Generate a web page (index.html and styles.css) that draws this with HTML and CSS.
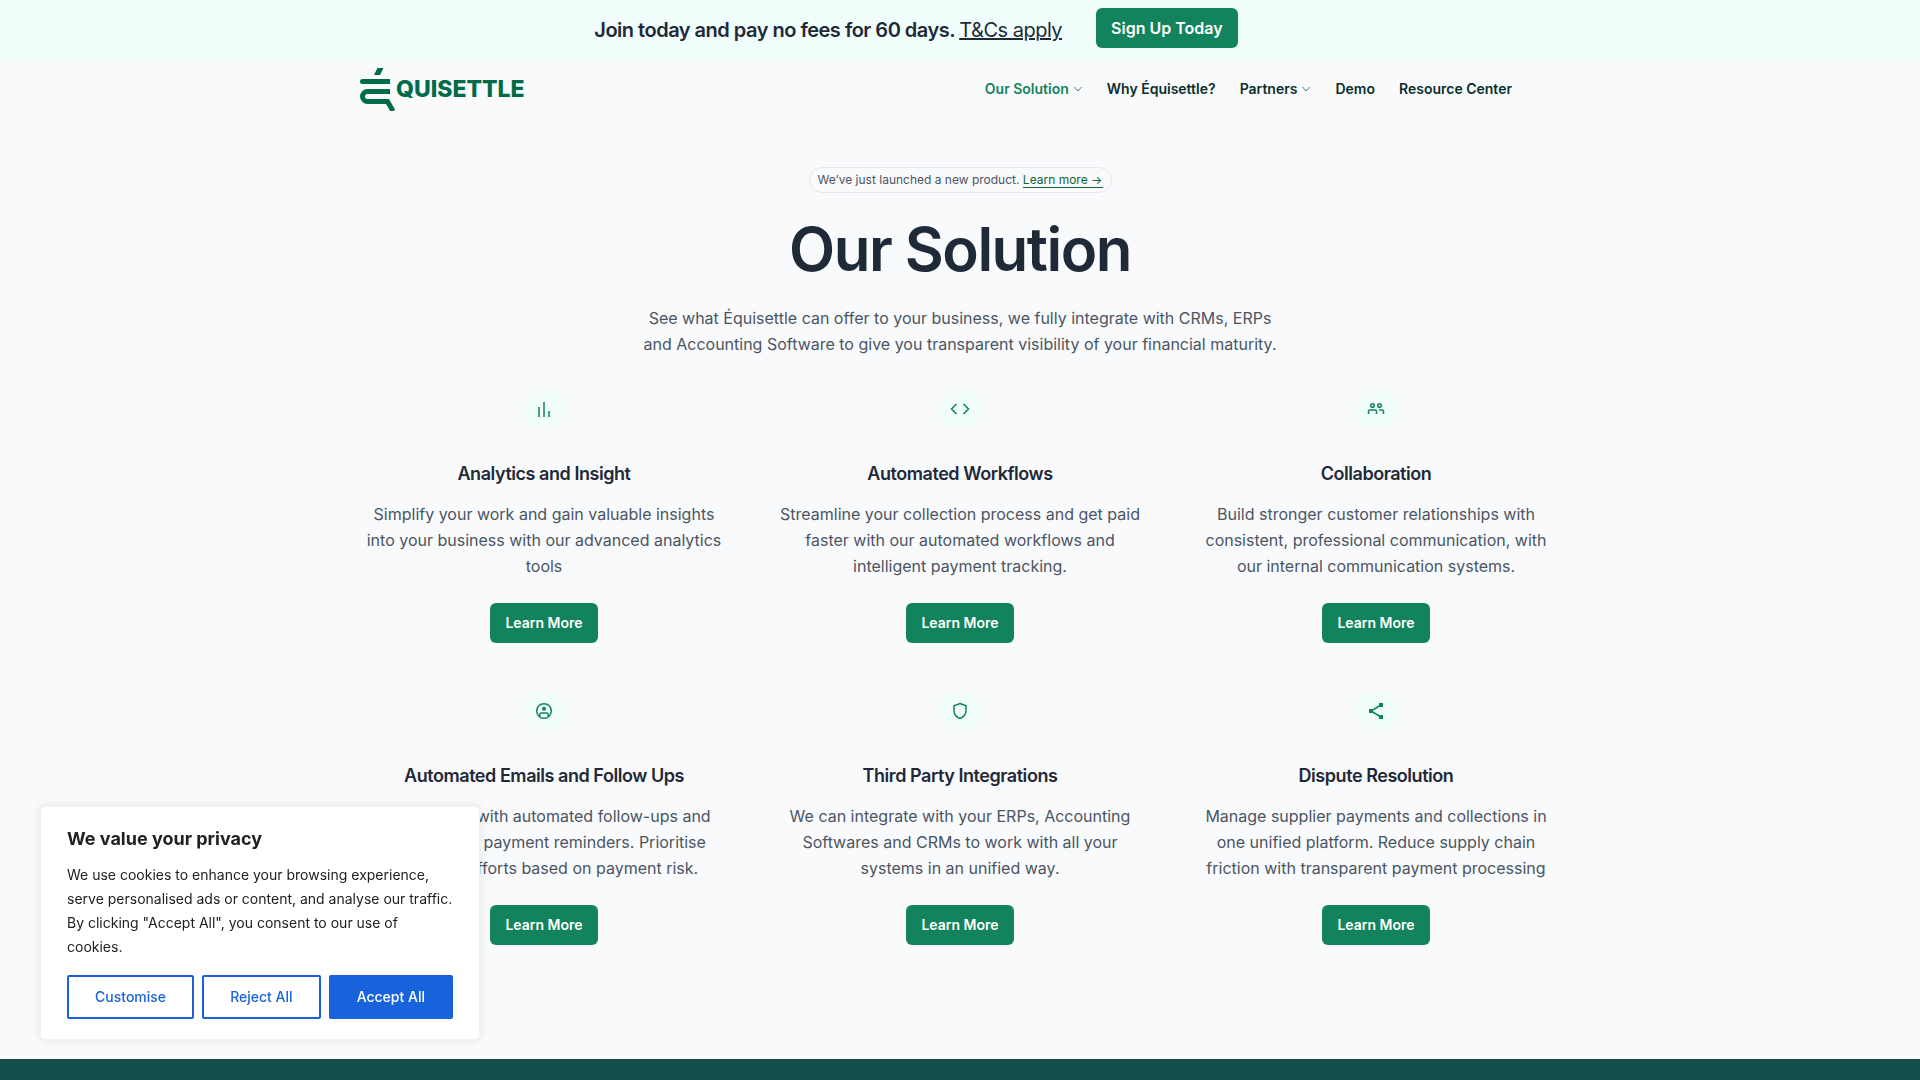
FILE: index.html
```html
<!DOCTYPE html>
<html lang="en">
  <head>
    <meta charset="UTF-8" />
    <meta name="viewport" content="width=device-width, initial-scale=1.0" />
    <title>Our Solution | Équisettle</title>
    <link rel="stylesheet" href="styles.css">
  </head>
  <body>
    <div class="banner">
      <p class="banner-text">Join today and pay no fees for 60 days. <a href="#">T&amp;Cs apply</a></p>
      <a href="#" class="btn btn-large">Sign Up Today</a>
    </div>

    <header class="header">
      <a href="#" class="logo" aria-label="Équisettle">
        <svg class="logo-mark" width="36" height="44" viewBox="0 0 36 44" fill="none">
          <path d="M17.500 1h6l-3.500 7h-6z" fill="#006b48" />
          <path d="M2.500 12H30v5H2.500a2.500 2.500 0 0 1 0-5z" fill="#006b48" />
          <path d="M30 24.500H7.500a5 5 0 0 0 0 10H27.500l5.500 9.500" stroke="#006b48" stroke-width="5" />
        </svg>
        <span class="logo-text">QUISETTLE</span>
      </a>
      <nav class="nav">
        <a href="#" class="active">Our Solution
          <svg width="10" height="6" viewBox="0 0 10 6"><path d="M1.500 1l3.500 4 3.500-4" /></svg>
        </a>
        <a href="#">Why Équisettle?</a>
        <a href="#">Partners
          <svg width="10" height="6" viewBox="0 0 10 6"><path d="M1.500 1l3.500 4 3.500-4" /></svg>
        </a>
        <a href="#">Demo</a>
        <a href="#">Resource Center</a>
      </nav>
    </header>

    <main class="main">
      <section class="hero">
        <p class="pill">We’ve just launched a new product. <a href="#">Learn more →</a></p>
        <h1>Our Solution</h1>
        <p class="hero-text">See what Équisettle can offer to your business, we fully integrate with CRMs, ERPs and Accounting Software to give you transparent visibility of your financial maturity.</p>
      </section>

      <section class="features">
        <article class="feature">
          <div class="icon">
            <svg width="20" height="20" viewBox="0 0 20 20"><path d="M5 8v10M10 3v15M15 12v6" /></svg>
          </div>
          <h2>Analytics and Insight</h2>
          <p>Simplify your work and gain valuable insights into your business with our advanced analytics tools</p>
          <a href="#" class="btn">Learn More</a>
        </article>
        <article class="feature">
          <div class="icon">
            <svg width="20" height="20" viewBox="0 0 20 20"><path d="M6.500 5L1.500 10l5 5M13.500 5l5 5-5 5" /></svg>
          </div>
          <h2>Automated Workflows</h2>
          <p>Streamline your collection process and get paid faster with our automated workflows and intelligent payment tracking.</p>
          <a href="#" class="btn">Learn More</a>
        </article>
        <article class="feature">
          <div class="icon">
            <svg width="20" height="20" viewBox="0 0 20 20"><circle cx="6.500" cy="6.500" r="1.800" /><circle cx="13.500" cy="6.500" r="1.800" /><path d="M2.500 15v-2.500a1.500 1.500 0 0 1 1.500-1.500h5a1.500 1.500 0 0 1 1.500 1.500V15M13 11h3a1.500 1.500 0 0 1 1.500 1.500V15" /></svg>
          </div>
          <h2>Collaboration</h2>
          <p>Build stronger customer relationships with consistent, professional communication, with our internal communication systems.</p>
          <a href="#" class="btn">Learn More</a>
        </article>
        <article class="feature">
          <div class="icon">
            <svg width="20" height="20" viewBox="0 0 20 20"><circle cx="10" cy="10" r="7.300" /><circle cx="10" cy="7.800" r="2" fill="#12835c" stroke="none" /><path d="M5.800 15.500v-2a1.500 1.500 0 0 1 1.500-1.500h5.400a1.500 1.500 0 0 1 1.500 1.500v2" /></svg>
          </div>
          <h2>Automated Emails and Follow Ups</h2>
          <p>Be proactive with automated follow-ups and personalised payment reminders. Prioritise collection efforts based on payment risk.</p>
          <a href="#" class="btn">Learn More</a>
        </article>
        <article class="feature">
          <div class="icon">
            <svg width="20" height="20" viewBox="0 0 20 20"><path d="M10 2.500l6 2.200v5c0 3.800-2.800 6.400-6 7.800-3.200-1.400-6-4-6-7.800v-5z" /></svg>
          </div>
          <h2>Third Party Integrations</h2>
          <p>We can integrate with your ERPs, Accounting Softwares and CRMs to work with all your systems in an unified way.</p>
          <a href="#" class="btn">Learn More</a>
        </article>
        <article class="feature">
          <div class="icon">
            <svg width="20" height="20" viewBox="0 0 20 20"><path d="M15 4L5 10l10 6" /><path d="M13 2h4v4h-4zM3 8h4v4H3zM13 14h4v4h-4z" fill="#12835c" stroke="none" /></svg>
          </div>
          <h2>Dispute Resolution</h2>
          <p>Manage supplier payments and collections in one unified platform. Reduce supply chain friction with transparent payment processing</p>
          <a href="#" class="btn">Learn More</a>
        </article>
      </section>
    </main>

    <footer class="footer"></footer>

    <div class="cookies" role="dialog" aria-labelledby="cookies-title">
      <p id="cookies-title" class="cookies-title">We value your privacy</p>
      <p class="cookies-text">We use cookies to enhance your browsing experience, serve personalised ads or content, and analyse our traffic. By clicking "Accept All", you consent to our use of cookies.</p>
      <div class="cookies-buttons">
        <button type="button">Customise</button>
        <button type="button">Reject All</button>
        <button type="button" class="accept">Accept All</button>
      </div>
    </div>
  </body>
</html>
```

FILE: styles.css
```css
* {
  box-sizing: border-box;
}
body {
  margin: 0;
  font-family: Inter, sans-serif;
  font-size: 16px;
  line-height: 26px;
  color: #4b5563;
  background: #f9fafc;
}
h1, h2, p {
  margin: 0;
}
.banner {
  display: flex;
  justify-content: center;
  align-items: flex-start;
  gap: 34px;
  padding: 8px 88px 12px 0;
  background: #f0fdfa;
}
.banner-text {
  padding-top: 8px;
  font-size: 20px;
  line-height: 28px;
  font-weight: 600;
  letter-spacing: -0.025em;
  color: #1f2937;
}
.banner-text a {
  color: inherit;
  font-weight: 400;
  text-decoration-thickness: 2px;
}
.btn {
  display: inline-block;
  padding: 0 15px;
  border-radius: 6px;
  background: #12835c;
  color: #fff;
  font-size: 14px;
  line-height: 40px;
  font-weight: 600;
  text-decoration: none;
}
.btn-large {
  font-size: 16px;
}
.header {
  display: flex;
  justify-content: space-between;
  align-items: center;
  max-width: 1200px;
  margin: 0 auto;
  padding: 7px 48px 7px 0;
}
.logo {
  display: flex;
  align-items: center;
  text-decoration: none;
}
.logo-text {
  color: #006b48;
  font-size: 23px;
  font-weight: 800;
}
.nav {
  display: flex;
  gap: 24px;
}
.nav a {
  display: flex;
  align-items: center;
  gap: 4px;
  color: #0b2e2c;
  font-size: 14px;
  font-weight: 600;
  text-decoration: none;
}
.nav a.active {
  color: #12835c;
}
.nav svg {
  fill: none;
  stroke: #4f7a72;
}
.main {
  max-width: 1200px;
  margin: 0 auto;
  padding: 49px 0 114px;
  text-align: center;
}
.hero {
  display: flex;
  flex-direction: column;
  align-items: center;
}
.pill {
  padding: 0 8px;
  border: 1px solid #e5e7eb;
  border-radius: 13px;
  font-size: 12px;
  line-height: 24px;
}
.pill a {
  border-bottom: 1px solid #166534;
  color: #166534;
  text-decoration: none;
}
.hero h1 {
  margin: 26px 0;
  color: #1f2937;
  font-size: 60px;
  line-height: 60px;
  font-weight: 600;
  letter-spacing: -0.025em;
}
.hero-text {
  max-width: 640px;
}
.features {
  display: grid;
  grid-template-columns: repeat(3, 1fr);
  gap: 48px;
  margin-top: 32px;
}
.feature {
  display: flex;
  flex-direction: column;
  align-items: center;
}
.icon {
  display: flex;
  align-items: center;
  justify-content: center;
  width: 40px;
  height: 40px;
  border-radius: 50%;
  background: #f0fdfa;
}
.icon svg {
  fill: none;
  stroke: #12835c;
  stroke-width: 1.5;
}
.feature h2 {
  margin: 31px 0 13px;
  color: #1f2937;
  font-size: 18px;
  line-height: 28px;
  font-weight: 600;
  letter-spacing: -0.025em;
}
.feature p {
  margin-bottom: 24px;
}
.footer {
  height: 320px;
  background: #134e4a;
}
.cookies {
  position: fixed;
  left: 40px;
  bottom: 40px;
  width: 440px;
  padding: 19px 26px 20px;
  border: 1px solid #f1f1f1;
  border-radius: 6px;
  background: #fff;
  color: #212121;
  box-shadow: 0 0 10px rgba(0, 0, 0, 0.1);
}
.cookies-title {
  font-size: 18px;
  line-height: 26px;
  font-weight: 700;
}
.cookies-text {
  margin: 11px 0 16px;
  font-size: 14px;
  line-height: 24px;
}
.cookies-buttons {
  display: flex;
  gap: 8px;
}
.cookies button {
  flex: 1 1 auto;
  height: 44px;
  padding: 0 22px 2px;
  border: 2px solid #1863dc;
  border-radius: 2px;
  background: transparent;
  color: #1863dc;
  font-family: inherit;
  font-size: 14px;
  font-weight: 500;
  cursor: pointer;
}
.cookies button.accept {
  background: #1863dc;
  color: #fff;
}
```
